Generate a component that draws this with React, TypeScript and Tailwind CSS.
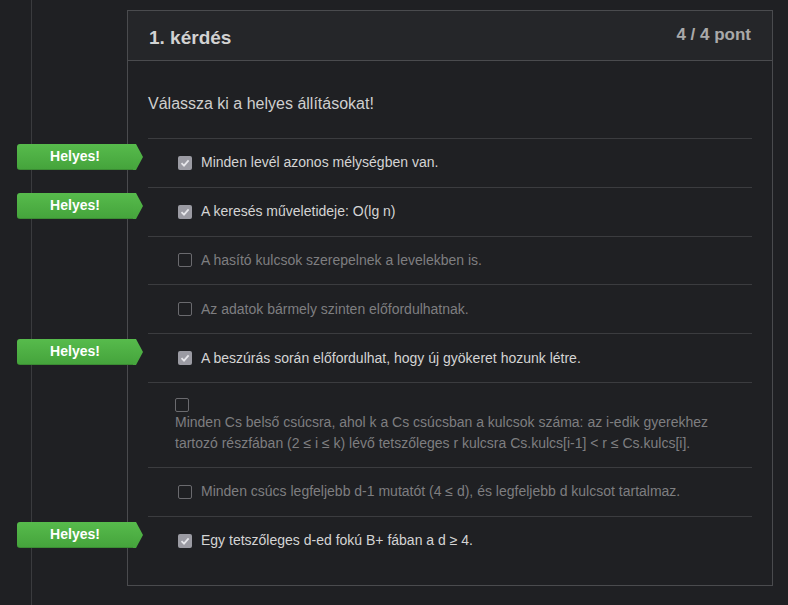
import React from 'react';

type Option = { text: React.ReactNode; checked: boolean; block?: boolean };

const options: Option[] = [
  { text: 'Minden levél azonos mélységben van.', checked: true },
  { text: 'A keresés műveletideje: O(lg n)', checked: true },
  { text: 'A hasító kulcsok szerepelnek a levelekben is.', checked: false },
  { text: 'Az adatok bármely szinten előfordulhatnak.', checked: false },
  { text: 'A beszúrás során előfordulhat, hogy új gyökeret hozunk létre.', checked: true },
  {
    text: 'Minden Cs belső csúcsra, ahol k a Cs csúcsban a kulcsok száma: az i-edik gyerekhez tartozó részfában (2 ≤ i ≤ k) lévő tetszőleges r kulcsra Cs.kulcs[i-1] < r ≤ Cs.kulcs[i].',
    checked: false,
    block: true,
  },
  { text: 'Minden csúcs legfeljebb d-1 mutatót (4 ≤ d), és legfeljebb d kulcsot tartalmaz.', checked: false },
  { text: 'Egy tetszőleges d-ed fokú B+ fában a d ≥ 4.', checked: true },
];

const Checkbox: React.FC<{ checked: boolean }> = ({ checked }) =>
  checked ? (
    <span className="inline-flex w-[14px] h-[14px] shrink-0 items-center justify-center rounded-[2px] bg-[#9b9ba3]">
      <svg width="10" height="10" viewBox="0 0 10 10">
        <path d="M1.5 5.2 L4 7.6 L8.6 2.4" fill="none" stroke="#e6e6ea" strokeWidth="1.8" />
      </svg>
    </span>
  ) : (
    <span className="inline-block w-[14px] h-[14px] shrink-0 rounded-[2px] border border-[#6a6a6e] bg-[#1e1f22]" />
  );

const Badge: React.FC = () => (
  <div className="absolute left-[-131px] top-[5px] flex items-center">
    <div className="h-[26px] w-[116px] rounded-l-[3px] border-b border-[#3b8c33] bg-gradient-to-b from-[#57bb4c] to-[#45a43c] flex items-center justify-center text-white text-[14px] font-bold">
      Helyes!
    </div>
    <svg width="10" height="26" viewBox="0 0 10 26" className="block">
      <defs>
        <linearGradient id="bg" x1="0" y1="0" x2="0" y2="1">
          <stop offset="0" stopColor="#57bb4c" />
          <stop offset="1" stopColor="#45a43c" />
        </linearGradient>
      </defs>
      <path d="M0 0 L3 0 L10 13 L3 26 L0 26 Z" fill="url(#bg)" />
    </svg>
  </div>
);

export default function App() {
  return (
    <div
      className="min-h-[605px] bg-[#1f2023] overflow-hidden"
      style={{ fontFamily: '"Liberation Sans", Arial, sans-serif' }}
    >
      <div className="ml-[31px] min-h-[605px] border-l border-[#3a3b3e] pt-[10px]">
        <div className="ml-[95px] w-[646px] border border-[#4a4b4e]">
          {/* Header */}
          <div className="h-[50px] bg-[#252629] border-b border-[#4a4b4e] px-[21px] flex justify-between">
            <h2 className="pt-[13px] text-[19px] font-bold text-[#d2d2d2]">1. kérdés</h2>
            <span className="pt-[11px] text-[17px] font-bold text-[#a9a9a9]">4 / 4 pont</span>
          </div>

          {/* Body */}
          <div className="px-[20px] pt-[31px] pb-[20px]">
            <p className="text-[16px] text-[#cfcfcf] mb-[22px]">Válassza ki a helyes állításokat!</p>
            <ul>
              {options.map((o, i) => (
                <li
                  key={i}
                  className={`relative border-t border-[#3b3c3f] text-[14px] ${
                    o.checked ? 'text-[#d4d4d4]' : 'text-[#7e7e80]'
                  } ${o.block ? 'pl-[27px] pt-[15px] pb-[13px]' : 'pl-[30px] h-[48.8px] flex items-center'}`}
                >
                  {o.checked && <Badge />}
                  {o.block ? (
                    <>
                      <div className="flex h-[14px]">
                        <Checkbox checked={o.checked} />
                      </div>
                      <div className="leading-[21px] pr-[20px]">{o.text}</div>
                    </>
                  ) : (
                    <>
                      <Checkbox checked={o.checked} />
                      <span className="ml-[9px]">{o.text}</span>
                    </>
                  )}
                </li>
              ))}
            </ul>
          </div>
        </div>
      </div>
    </div>
  );
}
